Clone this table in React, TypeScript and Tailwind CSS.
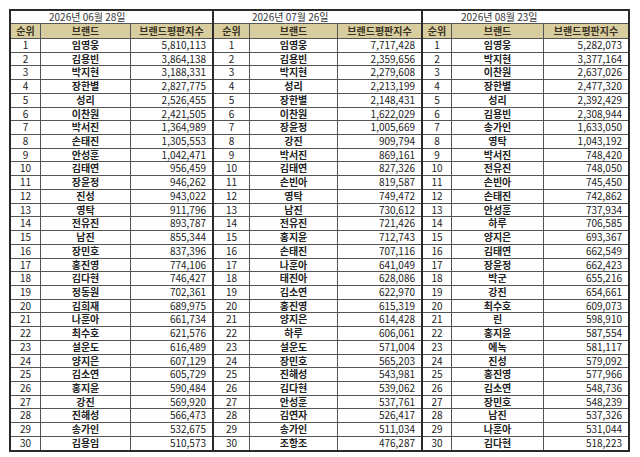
import React from 'react';

type Row = [string, string];

interface Board {
  date: string;
  cols: string;
  rows: Row[];
}

const boards: Board[] = [
  {
    date: '2026년 06월 28일',
    cols: 'grid-cols-[29px_90px_82px]',
    rows: [
      ['임영웅', '5,810,113'], ['김용빈', '3,864,138'], ['박지현', '3,188,331'], ['장한별', '2,827,775'],
      ['성리', '2,526,455'], ['이찬원', '2,421,505'], ['박서진', '1,364,989'], ['손태진', '1,305,553'],
      ['안성훈', '1,042,471'], ['김태연', '956,459'], ['장윤정', '946,262'], ['진성', '943,022'],
      ['영탁', '911,796'], ['전유진', '893,787'], ['남진', '855,344'], ['장민호', '837,396'],
      ['홍진영', '774,106'], ['김다현', '746,427'], ['정동원', '702,361'], ['김희재', '689,975'],
      ['나훈아', '661,734'], ['최수호', '621,576'], ['설운도', '616,489'], ['양지은', '607,129'],
      ['김소연', '605,729'], ['홍지윤', '590,484'], ['강진', '569,920'], ['진해성', '566,473'],
      ['송가인', '532,675'], ['김용임', '510,573'],
    ],
  },
  {
    date: '2026년 07월 26일',
    cols: 'grid-cols-[35px_88px_84px]',
    rows: [
      ['임영웅', '7,717,428'], ['김용빈', '2,359,656'], ['박지현', '2,279,608'], ['성리', '2,213,199'],
      ['장한별', '2,148,431'], ['이찬원', '1,622,029'], ['장윤정', '1,005,669'], ['강진', '909,794'],
      ['박서진', '869,161'], ['김태연', '827,326'], ['손빈아', '819,587'], ['영탁', '749,472'],
      ['남진', '730,612'], ['전유진', '721,426'], ['홍지윤', '712,743'], ['손태진', '707,116'],
      ['나훈아', '641,049'], ['태진아', '628,086'], ['김소연', '622,970'], ['홍진영', '615,319'],
      ['양지은', '614,428'], ['하루', '606,061'], ['설운도', '571,004'], ['장민호', '565,203'],
      ['진해성', '543,981'], ['김다현', '539,062'], ['안성훈', '537,761'], ['김연자', '526,417'],
      ['송가인', '511,034'], ['조항조', '476,287'],
    ],
  },
  {
    date: '2026년 08월 23일',
    cols: 'grid-cols-[28px_92px_85px]',
    rows: [
      ['임영웅', '5,282,073'], ['박지현', '3,377,164'], ['이찬원', '2,637,026'], ['장한별', '2,477,320'],
      ['성리', '2,392,429'], ['김용빈', '2,308,944'], ['송가인', '1,633,050'], ['영탁', '1,043,192'],
      ['박서진', '748,420'], ['전유진', '748,050'], ['손빈아', '745,450'], ['손태진', '742,862'],
      ['안성훈', '737,934'], ['하루', '706,585'], ['양지은', '693,367'], ['김태연', '662,549'],
      ['장윤정', '662,423'], ['박군', '655,216'], ['강진', '654,661'], ['최수호', '609,073'],
      ['린', '598,910'], ['홍지윤', '587,554'], ['에녹', '581,117'], ['진성', '579,092'],
      ['홍진영', '577,966'], ['김소연', '548,736'], ['장민호', '548,239'], ['남진', '537,326'],
      ['나훈아', '531,044'], ['김다현', '518,223'],
    ],
  },
];

function RankTable({ board, first }: { board: Board; first: boolean }) {
  return (
    <div className={`flex flex-col ${first ? '' : 'border-l-2 border-[#2a2a2a]'}`}>
      {/* date caption row */}
      <div className="h-[12px] pl-[38px] text-[10px] leading-[12px] text-[#333]">{board.date}</div>

      {/* header */}
      <div className={`grid ${board.cols} h-[15px] bg-[#d8cd9f] border-t border-[#555] text-[10px] leading-[14px] font-bold text-[#3a3222]`}>
        <div className="text-center">순위</div>
        <div className="text-center border-l border-[#555]">브랜드</div>
        <div className="text-center border-l border-[#555]">브랜드평판지수</div>
      </div>

      {board.rows.map(([name, score], i) => (
        <div
          key={name + i}
          className={`grid ${board.cols} h-[13.73px] border-t border-[#555] text-[10px] leading-[12.5px] text-[#222]`}
        >
          <div className="text-center">{i + 1}</div>
          <div className="text-center font-bold border-l border-[#555]">{name}</div>
          <div className="text-right pr-[6px] border-l border-[#555]">{score}</div>
        </div>
      ))}
    </div>
  );
}

export default function App() {
  return (
    <div
      className="w-[640px] h-[457px] bg-white pt-[9px] pl-[9px]"
      style={{ fontFamily: '"Noto Sans CJK KR", "Noto Sans", sans-serif' }}
    >
      <div className="flex w-fit border-2 border-[#2a2a2a]">
        {boards.map((b, i) => (
          <RankTable key={b.date} board={b} first={i === 0} />
        ))}
      </div>
    </div>
  );
}
